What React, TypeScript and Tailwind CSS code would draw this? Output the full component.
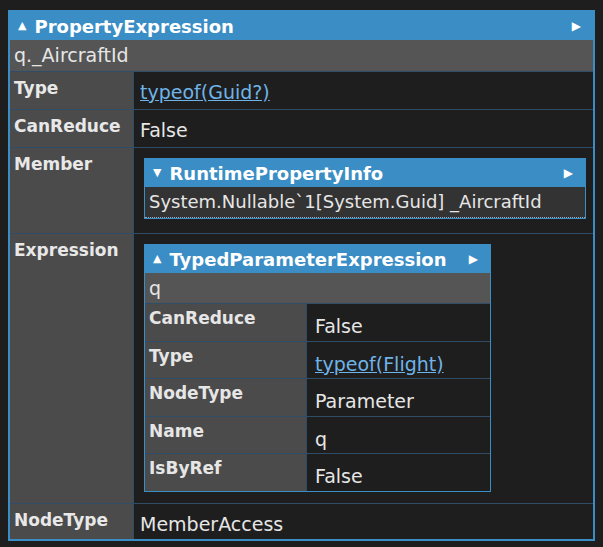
const blue = "bg-[#3a8dc5]";

function Header({ title, down }: { title: string; down?: boolean }) {
  return (
    <div className={`${blue} flex items-center justify-between pl-2 pr-3 text-white font-bold text-[18px] h-[28px]`}>
      <span className="flex items-center gap-2">
        <span className="text-[11px]">{down ? "▼" : "▲"}</span>
        {title}
      </span>
      <span className="text-[12px]">▶</span>
    </div>
  );
}

function Row({ label, children, labelW, h }: { label: string; children: React.ReactNode; labelW: string; h?: string }) {
  return (
    <div className={`flex border-t border-[#2f4d66] ${h ?? ""}`}>
      <div className={`${labelW} shrink-0 bg-[#4b4b4b] text-[#e8e8e8] font-bold text-[17px] px-1 pt-1 border-r border-[#2f4d66]`}>
        {label}
      </div>
      <div className="flex-1 bg-[#1e1e1e] text-[#e6e6e6] text-[19px] pl-[6px] pt-[6px] min-w-0">{children}</div>
    </div>
  );
}

const link = "text-[#6fb4e8] underline";

export default function App() {
  return (
    <div className="w-[603px] h-[547px] bg-[#1e1e1e] p-2 pt-[10px]" style={{ fontFamily: '"DejaVu Sans", "Noto Sans", sans-serif' }}>
      <div className="border-2 border-[#3a8dc5] w-[587px] h-[531px] flex flex-col overflow-hidden">
        <Header title="PropertyExpression" />
        <div className="bg-[#555555] text-[#e6e6e6] text-[19px] px-1 h-[31px] leading-[31px]">q._AircraftId</div>
        <Row label="Type" labelW="w-[124px]" h="h-[38px]"><span className={link}>typeof(Guid?)</span></Row>
        <Row label="CanReduce" labelW="w-[124px]" h="h-[38px]">False</Row>
        <Row label="Member" labelW="w-[124px]" h="h-[86px]">
          <div className="border border-[#3a8dc5] mt-[4px] ml-[4px] w-[442px]">
            <Header title="RuntimePropertyInfo" down />
            <div className="bg-[#333333] h-[31px] leading-[30px] px-1 text-[18px] whitespace-nowrap border-b border-dotted border-[#9ab]">System.Nullable`1[System.Guid] _AircraftId</div>
          </div>
        </Row>
        <Row label="Expression" labelW="w-[124px]" h="h-[270px]">
          <div className="border border-[#3a8dc5] mt-[4px] ml-[4px] w-[347px]">
            <Header title="TypedParameterExpression" />
            <div className="bg-[#555555] h-[30px] leading-[30px] px-1">q</div>
            {[
              ["CanReduce", "False"],
              ["Type", "typeof(Flight)"],
              ["NodeType", "Parameter"],
              ["Name", "q"],
              ["IsByRef", "False"],
            ].map(([k, v]) => (
              <div key={k} className="flex border-t border-[#2f4d66] h-[37.5px]">
                <div className="w-[162px] shrink-0 bg-[#4b4b4b] font-bold text-[17px] px-1 pt-[2px] border-r border-[#2f4d66]">{k}</div>
                <div className="flex-1 bg-[#1e1e1e] px-2 pt-2">
                  {k === "Type" ? <span className={link}>{v}</span> : v}
                </div>
              </div>
            ))}
          </div>
        </Row>
        <Row label="NodeType" labelW="w-[124px]" h="flex-1">MemberAccess</Row>
      </div>
    </div>
  );
}
